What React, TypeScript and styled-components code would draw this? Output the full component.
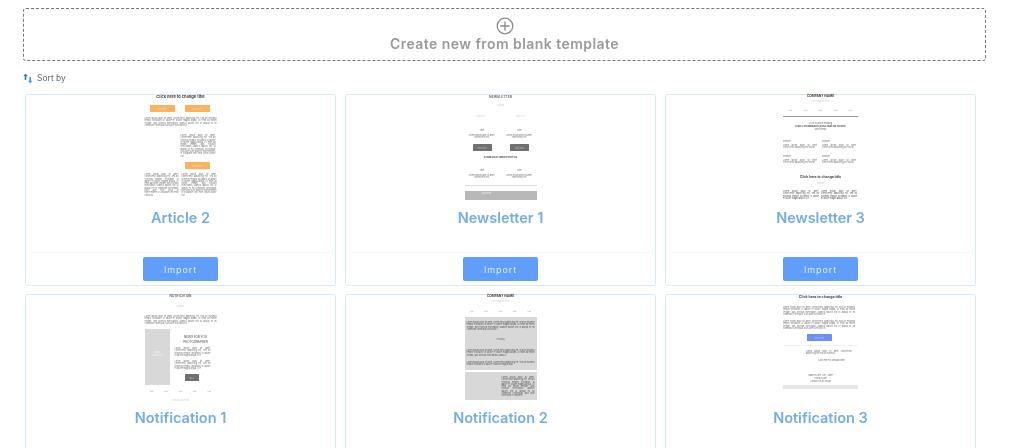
import React from "react";
import styled, { createGlobalStyle } from "styled-components";

const Global = createGlobalStyle`
  html, body { margin: 0; padding: 0; background: #fff; height: 448px; overflow: hidden; }
  #root { height: 448px; overflow: hidden; }
`;

const Page = styled.main`
  width: 1024px;
  height: 448px;
  overflow: hidden;
  box-sizing: border-box;
  padding: 8px 0 0 23px;
  font-family: Inter, "Open Sans", "Liberation Sans", sans-serif;
  filter: blur(0.35px);
`;

const BlankBox = styled.button`
  display: flex;
  flex-direction: column;
  align-items: center;
  width: 963px;
  height: 53px;
  box-sizing: border-box;
  padding: 8px 0 0;
  background: #fff;
  border: 1px dashed #777;
  border-radius: 3px;
  font-family: inherit;
`;

const BlankLabel = styled.span`
  font-size: 14px;
  line-height: 18px;
  font-weight: 600;
  letter-spacing: 0.45px;
  color: #9a9a9a;
`;

const SortRow = styled.div`
  display: flex;
  align-items: center;
  gap: 4px;
  height: 12px;
  margin-top: 11px;
  font-size: 8.5px;
  color: #666;
`;

const Grid = styled.section`
  display: grid;
  grid-template-columns: repeat(3, 311px);
  column-gap: 9px;
  row-gap: 8px;
  margin: 10px 0 0 2px;
`;

const Card = styled.article`
  height: 192px;
  box-sizing: border-box;
  border: 1px solid #d6e9f9;
  border-radius: 3px;
  display: flex;
  flex-direction: column;
  align-items: center;
`;

const Preview = styled.div`
  width: 100%;
  height: 107px;
  flex: none;
  display: flex;
  justify-content: center;
`;

const Thumb = styled.div<{ $w?: number }>`
  width: ${(p) => p.$w ?? 72}px;
  display: flex;
  flex-direction: column;
`;

const CardTitle = styled.h3`
  margin: 5px 0 0;
  height: 22px;
  font-size: 14.5px;
  line-height: 22px;
  font-weight: 600;
  color: #74aee0;
`;

const CardFoot = styled.footer`
  align-self: stretch;
  margin: 23px 5px 0;
  padding-top: 4px;
  border-top: 1px solid #f1f3f5;
  display: flex;
  justify-content: center;
`;

const ImportButton = styled.button`
  width: 75px;
  height: 24px;
  border: none;
  border-radius: 2px;
  background: #5f9ffb;
  color: #dbe9ff;
  font-family: inherit;
  font-size: 9px;
  letter-spacing: 0.9px;
`;

const MiniHeading = styled.div<{ $mt?: number; $size?: number; $h?: number; $weight?: number }>`
  margin-top: ${(p) => p.$mt ?? 0}px;
  height: ${(p) => p.$h ?? 4}px;
  line-height: ${(p) => p.$h ?? 4}px;
  font-size: ${(p) => p.$size ?? 4}px;
  font-weight: ${(p) => p.$weight ?? 700};
  text-align: center;
  white-space: nowrap;
  color: #444;
`;

const MiniCaption = styled.div<{ $mt?: number; $ml?: number; $left?: boolean; $faint?: boolean }>`
  margin-top: ${(p) => p.$mt ?? 0}px;
  margin-left: ${(p) => p.$ml ?? 0}px;
  height: 3px;
  line-height: 3px;
  font-size: 2.2px;
  text-align: ${(p) => (p.$left ? "left" : "center")};
  white-space: nowrap;
  color: ${(p) => (p.$faint ? "#ccc" : "#666")};
`;

const MiniPara = styled.p<{ $mt?: number; $ml?: number; $h: number; $w: number; $center?: boolean; $dark?: boolean }>`
  margin: ${(p) => p.$mt ?? 0}px 0 0 ${(p) => p.$ml ?? 0}px;
  height: ${(p) => p.$h}px;
  width: ${(p) => p.$w}px;
  flex: none;
  font-size: 2px;
  line-height: 2.3px;
  text-align: ${(p) => (p.$center ? "center" : "justify")};
  color: ${(p) => (p.$dark ? "#555" : "#707070")};
`;

const MiniRow = styled.div<{ $mt?: number; $pl?: number; $gap?: number }>`
  display: flex;
  margin-top: ${(p) => p.$mt ?? 0}px;
  padding-left: ${(p) => p.$pl ?? 0}px;
  gap: ${(p) => p.$gap ?? 3}px;
`;

const MiniButton = styled.div<{ $bg: string; $fg: string; $w: number; $mt?: number; $ml?: number }>`
  flex: none;
  display: flex;
  align-items: center;
  justify-content: center;
  width: ${(p) => p.$w}px;
  height: 7px;
  margin: ${(p) => p.$mt ?? 0}px 0 0 ${(p) => p.$ml ?? 0}px;
  background: ${(p) => p.$bg};
  color: ${(p) => p.$fg};
  font-size: 2px;
  border-radius: 0.5px;
`;

const MiniColumn = styled.div`
  display: flex;
  flex-direction: column;
  flex: 1;
  min-width: 0;
`;

const MiniNav = styled.div<{ $mt?: number }>`
  display: flex;
  justify-content: space-around;
  margin-top: ${(p) => p.$mt ?? 0}px;
  height: 3px;
  line-height: 3px;
  font-size: 1.8px;
  color: #999;
`;

const MiniRule = styled.div<{ $mt?: number; $color?: string }>`
  margin-top: ${(p) => p.$mt ?? 0}px;
  height: 1px;
  background: ${(p) => p.$color ?? "#aaa"};
`;

const MiniPanel = styled.div<{ $mt?: number; $h: number; $bg?: string; $pad?: string; $w?: number }>`
  box-sizing: border-box;
  margin-top: ${(p) => p.$mt ?? 0}px;
  height: ${(p) => p.$h}px;
  flex: none;
  width: ${(p) => (p.$w ? `${p.$w}px` : "auto")};
  background: ${(p) => p.$bg ?? "#d8d8d8"};
  padding: ${(p) => p.$pad ?? "0"};
`;

const MiniPanelLabel = styled.div<{ $mt?: number; $color?: string; $w?: number }>`
  margin-top: ${(p) => p.$mt ?? 0}px;
  width: ${(p) => (p.$w ? `${p.$w}px` : "auto")};
  text-align: center;
  font-size: 2px;
  line-height: 3px;
  height: 3px;
  color: ${(p) => p.$color ?? "#f4f4f4"};
`;

const LOREM =
  "Lorem ipsum dolor sit amet, consectetur adipiscing elit, sed do eiusmod tempor incididunt ut labore et dolore magna aliqua. Ut enim ad minim veniam, quis nostrud exercitation ullamco laboris nisi ut aliquip ex ea commodo consequat. Duis aute irure dolor in reprehenderit in voluptate velit esse cillum dolore eu fugiat nulla pariatur. Excepteur sint occaecat cupidatat non proident, sunt in culpa qui officia deserunt mollit anim id est laborum. Sed ut perspiciatis unde omnis iste natus error sit voluptatem accusantium doloremque laudantium totam rem aperiam eaque ipsa quae ab illo inventore veritatis et quasi architecto beatae vitae dicta sunt explicabo.";

// Only as much placeholder copy as fits a paragraph block of w x h pixels.
const fit = (w: number, h: number) => {
  const lines = Math.floor(h / 2.3);
  return LOREM.slice(0, Math.floor((w / 1.05) * lines * 0.94));
};

const Copy = (props: { w: number; h: number; mt?: number; ml?: number; dark?: boolean; center?: boolean }) => (
  <MiniPara $w={props.w} $h={props.h} $mt={props.mt} $ml={props.ml} $dark={props.dark} $center={props.center}>
    {fit(props.w, props.h)}
  </MiniPara>
);

const NAV = ["Link", "Link", "Link", "Link", "Link"];
const ORANGE = "#fbb25f";
const ORANGE_FG = "#ffdcb2";
const GREY = "#707070";
const GREY_FG = "#bbb";

const Nav = ({ mt }: { mt: number }) => (
  <MiniNav $mt={mt}>
    {NAV.map((n, i) => (
      <span key={i}>{n}</span>
    ))}
  </MiniNav>
);

const Article2 = () => (
  <Thumb>
    <MiniHeading>Click here to change title</MiniHeading>
    <MiniRow $mt={6} $pl={5} $gap={10}>
      <MiniButton $bg={ORANGE} $fg={ORANGE_FG} $w={25}>Click here</MiniButton>
      <MiniButton $bg={ORANGE} $fg={ORANGE_FG} $w={25}>Click here</MiniButton>
    </MiniRow>
    <Copy mt={5} w={72} h={11} />
    <Copy mt={6} ml={36} w={35} h={24} />
    <MiniButton $bg={ORANGE} $fg={ORANGE_FG} $w={25} $mt={4} $ml={40}>Click here</MiniButton>
    <MiniRow $mt={4}>
      <Copy w={34} h={25} />
      <Copy w={35} h={25} />
    </MiniRow>
  </Thumb>
);

const FeatureColumn = ({ button }: { button?: boolean }) => (
  <MiniColumn>
    <MiniCaption>Title</MiniCaption>
    <MiniPara $mt={2} $h={5} $w={34} $center>Lorem ipsum dolor sit amet consectetur elit</MiniPara>
    {button && <MiniButton $bg={GREY} $fg={GREY_FG} $w={19} $mt={5} $ml={8}>Click here</MiniButton>}
  </MiniColumn>
);

const Newsletter1 = () => (
  <Thumb>
    <MiniHeading $weight={500} $size={3.4}>NEWSLETTER</MiniHeading>
    <MiniCaption $mt={5} $faint>Subtitle</MiniCaption>
    <MiniRow $mt={8} $gap={6}>
      <MiniColumn><MiniCaption $faint>Link text</MiniCaption></MiniColumn>
      <MiniColumn><MiniCaption $faint>Link text</MiniCaption></MiniColumn>
    </MiniRow>
    <MiniRow $mt={11}>
      <FeatureColumn button />
      <FeatureColumn button />
    </MiniRow>
    <MiniHeading $mt={4} $size={2.6}>SOME FEATURED PHOTOS</MiniHeading>
    <MiniRow $mt={10}>
      <FeatureColumn />
      <FeatureColumn />
    </MiniRow>
    <MiniRule $mt={6} $color="#ddd" />
    <MiniPanel $mt={5} $h={9} $bg="#b8b8b8" $pad="1px 0 0 0">
      <MiniPanelLabel $w={44}>Click here</MiniPanelLabel>
    </MiniPanel>
  </Thumb>
);

const InfoColumn = () => (
  <MiniColumn>
    <MiniCaption $left>Feature</MiniCaption>
    <MiniPara $mt={1} $h={5} $w={34}>Lorem ipsum dolor sit amet consectetur adipiscing elit sed do</MiniPara>
  </MiniColumn>
);

const Newsletter3 = () => (
  <Thumb $w={75}>
    <MiniHeading $size={3.2} $h={3}>COMPANY NAME</MiniHeading>
    <MiniCaption $mt={2} $faint>Your tagline here</MiniCaption>
    <Nav mt={6} />
    <MiniRule $mt={4} $color="#999" />
    <MiniCaption $mt={5}>Click to add a heading</MiniCaption>
    <MiniHeading $size={2.1} $h={3}>LOVELY STRAWBERRY PEOPLE HERE ON HOLIDAY</MiniHeading>
    <MiniCaption>And friends</MiniCaption>
    <MiniRow $mt={9} $gap={3}>
      <InfoColumn />
      <InfoColumn />
    </MiniRow>
    <MiniRow $mt={6} $gap={3}>
      <InfoColumn />
      <InfoColumn />
    </MiniRow>
    <MiniHeading $mt={11} $size={3.4}>Click here to change title</MiniHeading>
    <MiniCaption $mt={3} $faint>Subtitle</MiniCaption>
    <MiniRow $mt={5} $gap={2}>
      <Copy w={36} h={10} dark />
      <Copy w={36} h={10} dark />
    </MiniRow>
  </Thumb>
);

const Notification1 = () => (
  <Thumb>
    <MiniHeading $weight={500} $size={3.1} $h={3}>NOTIFICATION</MiniHeading>
    <MiniCaption $mt={7} $faint>Subtitle</MiniCaption>
    <Copy mt={7} w={72} h={11} />
    <MiniRow $mt={3} $gap={5}>
      <MiniPanel $h={56} $w={25} $pad="22px 2px 0">
        <MiniPanelLabel>Image</MiniPanelLabel>
        <MiniPanelLabel>Caption text</MiniPanelLabel>
      </MiniPanel>
      <MiniColumn>
        <MiniHeading $mt={6} $weight={400} $size={3}>NEWS FOR YOU</MiniHeading>
        <MiniHeading $mt={1} $weight={400} $size={3}>PHOTOGRAPHER</MiniHeading>
        <Copy mt={3} w={36} h={11} />
        <Copy mt={2} w={36} h={11} />
        <MiniButton $bg={GREY} $fg={GREY_FG} $w={14} $mt={3} $ml={10}>Click</MiniButton>
      </MiniColumn>
    </MiniRow>
    <Nav mt={5} />
    <MiniCaption $mt={6} $faint>Unsubscribe link</MiniCaption>
  </Thumb>
);

const Notification2 = () => (
  <Thumb>
    <MiniHeading $size={3.2} $h={3}>COMPANY NAME</MiniHeading>
    <MiniCaption $mt={2} $faint>Your tagline here</MiniCaption>
    <Nav mt={7} />
    <MiniPanel $mt={4} $h={53} $pad="4px 2px 0">
      <Copy w={68} h={10} dark />
      <MiniPanelLabel $mt={7} $color="#777">Heading</MiniPanelLabel>
      <Copy mt={8} w={68} h={8} dark />
      <Copy mt={4} w={68} h={5} dark />
    </MiniPanel>
    <MiniPanel $mt={2} $h={28} $pad="4px 2px 0 37px">
      <Copy w={33} h={21} dark />
    </MiniPanel>
  </Thumb>
);

const Notification3 = () => (
  <Thumb $w={75}>
    <MiniHeading $size={3.6}>Click here to change title</MiniHeading>
    <Copy mt={7} w={72} h={11} />
    <Copy mt={3} w={72} h={11} />
    <MiniButton $bg="#6d90f2" $fg="#b9c9f8" $w={25} $mt={3} $ml={24}>Click here</MiniButton>
    <MiniRule $mt={4} $color="#f2f2f2" />
    <MiniPara $mt={4} $ml={23} $h={5} $w={46}>Lorem ipsum dolor sit amet consectetur adipiscing elit sed do eiusmod</MiniPara>
    <MiniCaption $mt={4} $ml={22}>Click here to unsubscribe</MiniCaption>
    <MiniCaption $mt={12}>Address line, City, State</MiniCaption>
    <MiniCaption>Postal code</MiniCaption>
    <MiniCaption>Contact us by email</MiniCaption>
    <MiniPanel $mt={2} $h={4} $bg="#e6e6e6" />
  </Thumb>
);

const PlusCircle = () => (
  <svg width="18" height="18" viewBox="0 0 18 18" fill="none" stroke="#8a8a8a" strokeWidth="1.3" strokeLinecap="round">
    <circle cx="9" cy="9" r="7.8" />
    <path d="M9 4.8v8.4M4.8 9h8.4" />
  </svg>
);

const SortIcon = () => (
  <svg width="10" height="11" viewBox="0 0 10 11" fill="none" strokeWidth="1.6">
    <path d="M2.5 2v5" stroke="#2f78b8" />
    <path d="M0.3 3.2 2.5 0.4 4.7 3.2Z" fill="#2f78b8" stroke="none" />
    <path d="M7.2 4v5" stroke="#3f9fe8" />
    <path d="M5 7.8 7.2 10.6 9.4 7.8Z" fill="#3f9fe8" stroke="none" />
  </svg>
);

const templates = [
  { name: "Article 2", art: <Article2 /> },
  { name: "Newsletter 1", art: <Newsletter1 /> },
  { name: "Newsletter 3", art: <Newsletter3 /> },
  { name: "Notification 1", art: <Notification1 /> },
  { name: "Notification 2", art: <Notification2 /> },
  { name: "Notification 3", art: <Notification3 /> },
];

export default function App() {
  return (
    <Page>
      <Global />
      <BlankBox>
        <PlusCircle />
        <BlankLabel>Create new from blank template</BlankLabel>
      </BlankBox>
      <SortRow>
        <SortIcon />
        Sort by
      </SortRow>
      <Grid>
        {templates.map((t) => (
          <Card key={t.name}>
            <Preview>{t.art}</Preview>
            <CardTitle>{t.name}</CardTitle>
            <CardFoot>
              <ImportButton>Import</ImportButton>
            </CardFoot>
          </Card>
        ))}
      </Grid>
    </Page>
  );
}
